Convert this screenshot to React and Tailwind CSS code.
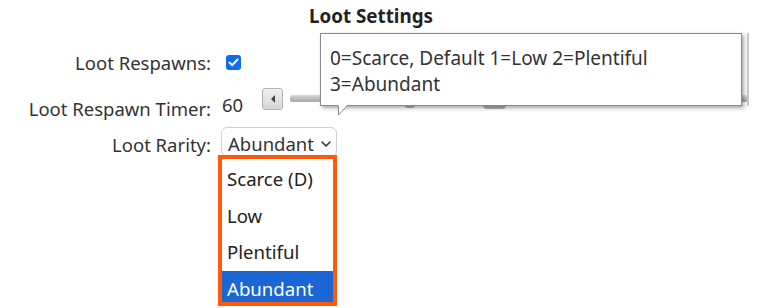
export default function App() {
  return (
    <div className="relative w-[762px] h-[308px] overflow-hidden bg-white text-[#333] font-['Noto_Sans',sans-serif]">
      <div className="pl-[309px] pt-[4px] text-[18.8px] leading-[24px] font-bold text-[#222]">Loot Settings</div>

      <div className="mt-[20px] flex flex-col">
        {/* Row 1 */}
        <div className="flex h-[40px] items-start">
          <div className="mt-[1px] w-[211px] text-right text-[18.5px] leading-[28px]">Loot Respawns:</div>
          <div className="ml-[15px] mt-[7px] flex h-[15px] w-[15px] items-center justify-center rounded-[3px] bg-[#0b6cf5]">
            <svg width="11" height="9" viewBox="0 0 11 9" fill="none">
              <path d="M1.5 4.5 L4.2 7.2 L9.5 1.5" stroke="white" strokeWidth="2" strokeLinecap="round" strokeLinejoin="round" />
            </svg>
          </div>
        </div>

        {/* Row 2 */}
        <div className="flex h-[39px] items-start">
          <div className="mt-[7px] w-[211px] text-right text-[18.5px] leading-[28px]">Loot Respawn Timer:</div>
          <div className="ml-[11px] mt-[3px] w-[40px] text-[18.5px] leading-[28px]">60</div>
          <div className="relative flex items-start">
            <div className="flex h-[22px] w-[21px] items-center justify-center rounded-[3px] border border-[#b5b5b5] bg-gradient-to-b from-[#f2f2f2] to-[#d4d4d4]">
              <div className="h-0 w-0 border-y-[4px] border-r-[4px] border-y-transparent border-r-[#444]" />
            </div>
            <div className="ml-[7px] mt-[7px] h-[7px] w-[458px] rounded-[2px] bg-gradient-to-b from-[#dcdcdc] via-[#bdbdbd] to-[#a8a8a8]" />
            <div className="absolute left-[143px] top-[8px] h-[12px] w-[10px] rounded-[3px] bg-[#b0b0b0]" />
            <div className="absolute left-[221px] top-[6px] h-[15px] w-[23px] rounded-[4px] bg-[#b3b3b3]" />
          </div>
        </div>

        {/* Row 3 */}
        <div className="flex items-start">
          <div className="mt-[4px] w-[211px] text-right text-[18.5px] leading-[28px]">Loot Rarity:</div>
          <div className="ml-[10px] flex h-[30px] w-[116px] items-center justify-between rounded-[6px] border border-[#d0d0d0] pl-[6px] pr-[5px] pt-[3px]">
            <span className="text-[18.5px] leading-[26px]">Abundant</span>
            <svg width="10" height="6" viewBox="0 0 10 6" fill="none">
              <path d="M1 1 L5 5 L9 1" stroke="#333" strokeWidth="1.6" strokeLinecap="round" strokeLinejoin="round" />
            </svg>
          </div>
        </div>
      </div>

      {/* faint line behind tooltip */}
      <div className="absolute left-[747px] top-[33px] h-[73px] w-[2px] bg-[#c8c8c8]" />

      {/* Tooltip */}
      <div className="absolute left-[320px] top-[33px] h-[73px] w-[422px] border border-[#8a8a8a] bg-white pl-[9px] pt-[11px] text-[19px] leading-[26px] text-[#333] shadow-[2px_2px_4px_rgba(0,0,0,0.35)]">
        <div>0=Scarce, Default 1=Low 2=Plentiful</div>
        <div>3=Abundant</div>
      </div>
      <svg className="absolute left-[338px] top-[105px]" width="10" height="11" viewBox="0 0 10 11">
        <polygon points="0.5,0 0.5,10 9,0" fill="white" />
        <polyline points="0.5,1 0.5,10 9,1" fill="none" stroke="#8a8a8a" strokeWidth="1" />
      </svg>

      {/* Dropdown list */}
      <div className="absolute left-[218px] top-[155px] h-[151px] w-[119px] overflow-hidden border-4 border-[#ff5a0a] bg-white pt-[2px]">
        <div className="h-[36.5px] pl-[5px] text-[18.6px] leading-[36.5px] text-[#222]">Scarce (D)</div>
        <div className="h-[36.5px] pl-[5px] text-[18.6px] leading-[36.5px] text-[#222]">Low</div>
        <div className="h-[36.5px] pl-[5px] text-[18.6px] leading-[36.5px] text-[#222]">Plentiful</div>
        <div className="h-[36.5px] bg-[#1a66d4] pl-[5px] text-[18.6px] leading-[36.5px] text-white">Abundant</div>
      </div>
    </div>
  );
}
